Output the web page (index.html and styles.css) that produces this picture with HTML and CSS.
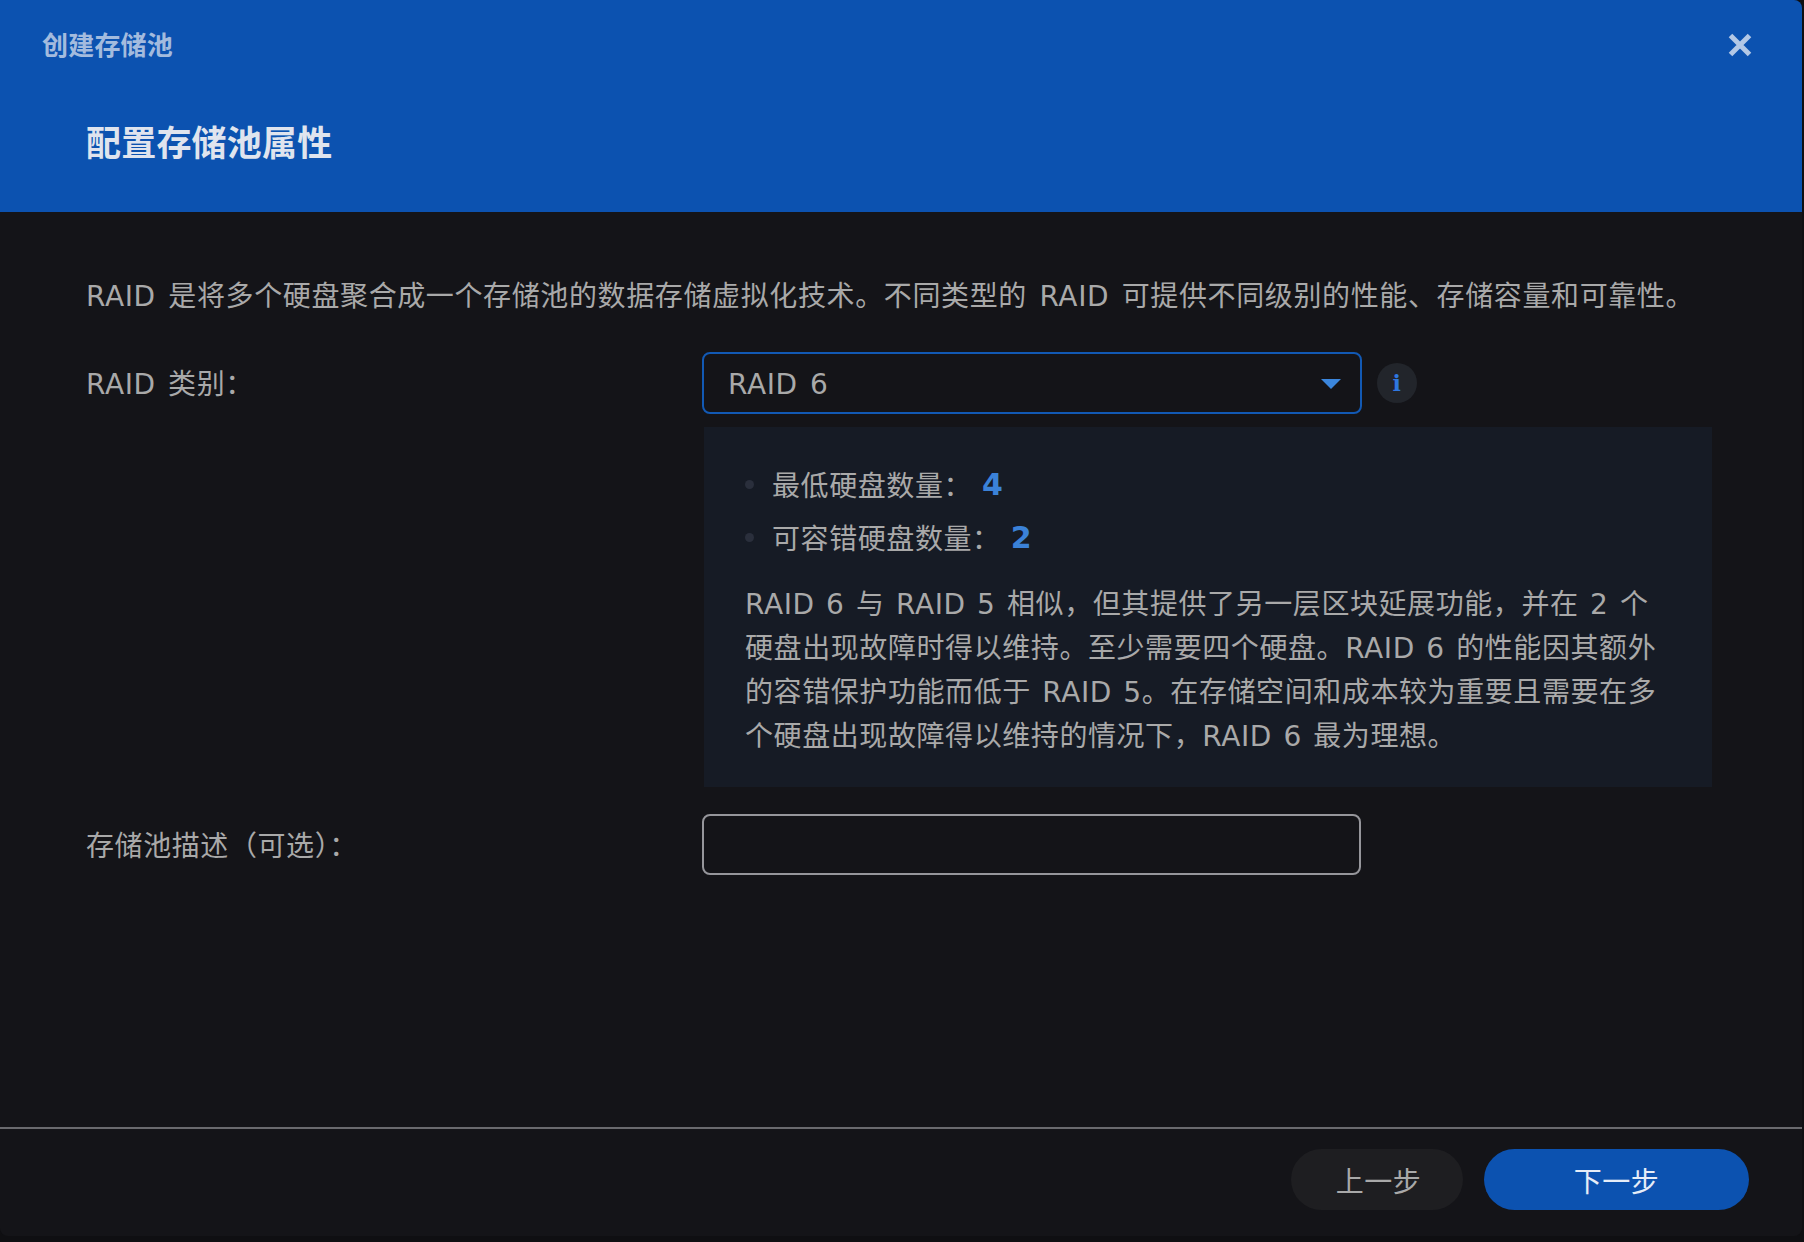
FILE: index.html
```html
<!DOCTYPE html>
<html lang="zh-CN">
<head>
    <meta charset="UTF-8">
    <title>创建存储池</title>
    <link rel="stylesheet" href="styles.css">
</head>
<body>
    <div class="dialog">
        <header class="header">
            <div class="header-top">
                <span class="app-title">创建存储池</span>
                <svg class="close" viewBox="0 0 24 24" width="24" height="24">
                    <path d="M2.5 2.5L21.5 21.5M21.5 2.5L2.5 21.5" stroke="#b3c8e6" stroke-width="5" fill="none"/>
                </svg>
            </div>
            <h1 class="step-title">配置存储池属性</h1>
        </header>

        <main class="content">
            <p class="intro">RAID 是将多个硬盘聚合成一个存储池的数据存储虚拟化技术。不同类型的 RAID 可提供不同级别的性能、存储容量和可靠性。</p>

            <div class="row">
                <label class="label">RAID 类别：</label>
                <div class="control">
                    <div class="select">
                        <span>RAID 6</span>
                        <span class="caret"></span>
                    </div>
                    <span class="info"><span class="info-i">i</span></span>
                </div>
            </div>

            <div class="panel">
                <ul class="facts">
                    <li><span class="fact-name">最低硬盘数量：</span><b>4</b></li>
                    <li><span class="fact-name">可容错硬盘数量：</span><b>2</b></li>
                </ul>
                <p class="panel-text">RAID 6 与 RAID 5 相似，但其提供了另一层区块延展功能，并在 2 个<br>硬盘出现故障时得以维持。至少需要四个硬盘。RAID 6 的性能因其额外<br>的容错保护功能而低于 RAID 5。在存储空间和成本较为重要且需要在多<br>个硬盘出现故障得以维持的情况下，RAID 6 最为理想。</p>
            </div>

            <div class="row row-desc">
                <label class="label">存储池描述（可选）：</label>
                <div class="control">
                    <input class="text-input" type="text">
                </div>
            </div>
        </main>

        <footer class="footer">
            <button class="btn btn-prev">上一步</button>
            <button class="btn btn-next">下一步</button>
        </footer>
    </div>
</body>
</html>
```

FILE: styles.css
```css
* {
    box-sizing: border-box;
}
body {
    margin: 0;
    height: 1242px;
    overflow: hidden;
    background-color: #0f0f12;
    font-family: "DejaVu Sans", "Noto Sans CJK SC", sans-serif;
    color: #a9a9a9;
    font-size: 28px;
    letter-spacing: 0.58px;
    word-spacing: 3px;
}
.dialog {
    width: 1802px;
    height: 1236px;
    display: flex;
    flex-direction: column;
    background-color: #141418;
    border-radius: 0 8px 8px 8px;
    overflow: hidden;
}
.header {
    height: 212px;
    flex-shrink: 0;
    background-color: #0c52b0;
    padding: 25px 50px 0 42px;
}
.header-top {
    display: flex;
    justify-content: space-between;
    align-items: center;
    height: 36px;
}
.app-title {
    font-size: 26px;
    font-weight: 700;
    color: #a3bbde;
    letter-spacing: 0.2px;
}
.close {
    margin-top: 3px;
}
.step-title {
    margin: 57px 0 0 44px;
    font-size: 35px;
    line-height: 52px;
    font-weight: 700;
    color: #dfe4ee;
    letter-spacing: 0.2px;
}
.content {
    flex: 1;
    padding: 63px 90px 0 86px;
}
.intro {
    margin: 0;
    line-height: 44px;
    white-space: nowrap;
    letter-spacing: 0.62px;
}
.row {
    display: flex;
    align-items: center;
    margin-top: 33px;
}
.label {
    width: 616px;
    margin-top: -2px;
}
.control {
    display: flex;
    align-items: center;
}
.select {
    width: 660px;
    height: 62px;
    padding: 2px 19px 0 24px;
    display: flex;
    align-items: center;
    justify-content: space-between;
    border: 2px solid #1259b4;
    border-radius: 8px;
}
.caret {
    border-left: 10px solid transparent;
    border-right: 10px solid transparent;
    border-top: 10px solid #3b86dc;
}
.info {
    width: 40px;
    height: 40px;
    margin-left: 15px;
    border-radius: 50%;
    background-color: #22252b;
    display: flex;
    align-items: center;
    justify-content: center;
}
.info-i {
    font-family: "DejaVu Serif", serif;
    font-weight: 700;
    font-size: 22px;
    color: #2f78e0;
}
.panel {
    width: 1008px;
    height: 360px;
    margin: 13px 0 0 618px;
    padding: 31px 40px 0 41px;
    background-color: #161b25;
}
.facts {
    margin: 0;
    padding: 0;
    list-style: none;
}
.facts li {
    display: flex;
    align-items: center;
    height: 53px;
}
.facts li::before {
    content: "";
    width: 9px;
    height: 9px;
    margin-right: 18px;
    border-radius: 50%;
    background-color: #2a2f3c;
}
.fact-name {
    margin: -2px 10px 0 0;
}
.facts b {
    font-size: 30px;
    font-weight: 700;
    color: #3b82d8;
}
.panel-text {
    margin: 19px 0 0;
    line-height: 44px;
    white-space: nowrap;
    word-spacing: 2px;
}
.row-desc {
    margin-top: 27px;
}
.text-input {
    display: block;
    width: 659px;
    height: 61px;
    background: transparent;
    border: 2px solid #96969b;
    border-radius: 8px;
}
.footer {
    height: 109px;
    flex-shrink: 0;
    border-top: 2px solid #6a6a6e;
    padding: 20px 53px 0 0;
    display: flex;
    justify-content: flex-end;
    gap: 21px;
}
.btn {
    height: 61px;
    border: none;
    border-radius: 31px;
    font-family: inherit;
    font-size: 28px;
    letter-spacing: inherit;
}
.btn-prev {
    width: 172px;
    padding-left: 9px;
    background-color: #1e1e21;
    color: #a9a9a9;
}
.btn-next {
    width: 265px;
    background-color: #0c52b0;
    color: #e6edf8;
}
```
